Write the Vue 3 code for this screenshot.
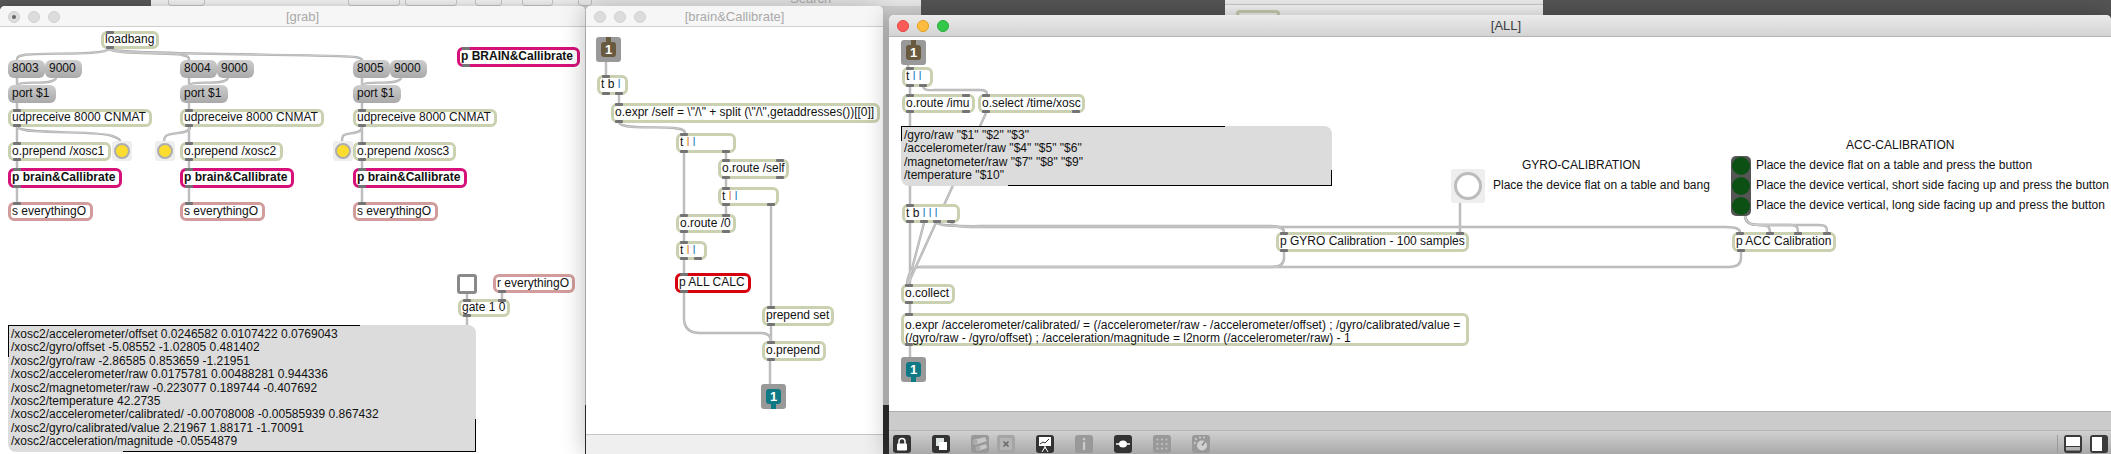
<script setup>
// page coordinates are kept in the data, each canvas subtracts its own origin
const node = (x, y, w, h, text, kind = 'obj', ins = [9], outs = [9]) => ({ x, y, w, h, text, kind, ins, outs })
const t = (txt, c) => ({ txt, c })
const ORANGE = '#d9822b'
const BLUE = '#2a7fc0'

const columns = [
  { x: 8, a: '8003', b: '9000', osc: '/xosc1' },
  { x: 180, a: '8004', b: '9000', osc: '/xosc2' },
  { x: 353, a: '8005', b: '9000', osc: '/xosc3' },
]

const grabNodes = [
  node(101, 31, 58, 18, 'loadbang'),
  ...columns.flatMap((c) => [
    node(c.x, 60, 37, 18, c.a, 'num', [], []),
    node(c.x + 37, 60, 37, 18, c.b, 'num', [], []),
    node(c.x, 85, 48, 18, 'port $1', 'num', [], []),
    node(c.x, 109, 144, 18, 'udpreceive 8000 CNMAT'),
    node(c.x, 142, 103, 19, 'o.prepend ' + c.osc),
    node(c.x, 168, 114, 20, 'p brain&Callibrate', 'patcher'),
    node(c.x, 202, 85, 19, 's everythingO', 'send', [9], []),
  ]),
  node(457, 47, 123, 20, 'p BRAIN&Callibrate', 'patcher', [9], [9]),
  node(493, 274, 82, 19, 'r everythingO', 'send', [], [9]),
  node(458, 299, 52, 18, 'gate 1 0', 'obj', [9, 44], [9]),
]

const grabLeds = [
  { x: 112, y: 141 },
  { x: 155, y: 141 },
  { x: 333, y: 141 },
]

const grabMessage = {
  x: 8, y: 325, w: 468, h: 127, top: 351, left: 31, bottom: 352, right: 32,
  lines: [
    '/xosc2/accelerometer/offset 0.0246582 0.0107422 0.0769043',
    '/xosc2/gyro/offset -5.08552 -1.02805 0.481402',
    '/xosc2/gyro/raw -2.86585 0.853659 -1.21951',
    '/xosc2/accelerometer/raw 0.0175781 0.00488281 0.944336',
    '/xosc2/magnetometer/raw -0.223077 0.189744 -0.407692',
    '/xosc2/temperature 42.2735',
    '/xosc2/accelerometer/calibrated/ -0.00708008 -0.00585939 0.867432',
    '/xosc2/gyro/calibrated/value 2.21967 1.88171 -1.70091',
    '/xosc2/acceleration/magnitude -0.0554879',
  ],
}

const grabWires = [
  'M109 49C105 56 40 52 24 55C17 56 17 58 17 60',
  'M109 49C115 55 170 52 182 55C189 56 189 58 189 60',
  'M109 49C118 55 340 54 355 57C361 58 362 59 362 60',
  ...columns.flatMap((c) => [
    `M${c.x + 9} 78V85`,
    `M${c.x + 48} 78C${c.x + 46} 86 ${c.x + 12} 80 ${c.x + 9} 85`,
    `M${c.x + 9} 103V109M${c.x + 9} 127V142M${c.x + 9} 161V168M${c.x + 9} 188V202`,
  ]),
  'M17 127C22 135 100 130 112 136C118 138 120 140 120 141',
  'M190 127C190 135 170 132 166 136C164 138 164 140 164 141',
  'M362 127C362 135 346 132 343 136C342 138 342 140 342 141',
  'M467 294V299M502 293V299M467 317V325',
]

const brainNodes = [
  node(597, 75, 31, 20, [t('t '), t('b '), t('l', BLUE)], 'obj', [9], [9, 22]),
  node(611, 103, 269, 20, 'o.expr /self = \\"/\\" + split (\\"/\\",getaddresses())[[0]]', 'obj', [8], [8]),
  node(676, 133, 60, 20, [t('t '), t('l', ORANGE), t(' '), t('l', BLUE)], 'obj', [8], [8, 50]),
  node(718, 159, 71, 20, 'o.route /self', 'obj', [8, 62], [8, 62]),
  node(718, 187, 61, 19, [t('t '), t('l', ORANGE), t(' '), t('l', BLUE)], 'obj', [8], [8, 53]),
  node(676, 214, 60, 19, 'o.route /0', 'obj', [8, 50], [8, 50]),
  node(676, 241, 31, 19, [t('t '), t('l', ORANGE), t(' '), t('l', BLUE)], 'obj', [8], [8, 22]),
  node(675, 273, 76, 20, 'p ALL CALC', 'patcherRed'),
  node(762, 306, 72, 20, 'prepend set'),
  node(762, 341, 64, 20, 'o.prepend'),
]

const brainWires = [
  'M606 62V75M619 95V103',
  'M619 123C624 130 660 126 674 128C682 129 685 130 685 133',
  'M684 153V214M726 153V159M726 179V187M726 206V214M771 206V306',
  'M684 233V241M684 260V273',
  'M684 293V318C684 328 690 333 700 333H760C768 333 771 336 771 341',
  'M771 326V341M770 361V384',
]

const allNodes = [
  node(902, 67, 31, 20, [t('t '), t('l', BLUE), t(' '), t('l', BLUE)], 'obj', [8], [8, 21]),
  node(902, 94, 73, 19, 'o.route /imu', 'obj', [8, 64], [8, 64]),
  node(978, 94, 107, 19, 'o.select /time/xosc', 'obj', [8], [8, 98]),
  node(902, 204, 58, 19, [t('t b '), t('l l l', BLUE)], 'obj', [8], [8, 22, 35, 49]),
  node(1276, 232, 193, 20, 'p GYRO Calibration - 100 samples', 'obj', [8, 184], [8]),
  node(1732, 232, 104, 20, 'p ACC Calibration', 'obj', [8, 38, 66, 95], [9]),
  node(901, 284, 54, 20, 'o.collect', 'obj', [8], [8]),
  node(901, 313, 568, 33,
    'o.expr /accelerometer/calibrated/ = (/accelerometer/raw - /accelerometer/offset) ; /gyro/calibrated/value = (/gyro/raw - /gyro/offset) ; /acceleration/magnitude = l2norm (/accelerometer/raw) - 1',
    'wrap', [8], [8]),
]

const allMessage = {
  x: 901, y: 126, w: 431, h: 60, top: 323, left: 14, bottom: 323, right: 15,
  lines: [
    '/gyro/raw "$1" "$2" "$3"',
    '/accelerometer/raw "$4" "$5" "$6"',
    '/magnetometer/raw "$7" "$8" "$9"',
    '/temperature "$10"',
  ],
}

const allWires = [
  'M908 65V67M910 87V94',
  'M923 87C925 91 930 90 940 90H980C986 90 987 92 987 94',
  'M910 113V284',
  'M986 113L908 284',
  'M924 223L908 284',
  'M937 223C942 227 970 226 990 226H1270C1280 226 1284 229 1284 232',
  'M951 223C956 228 970 227 990 227H1725C1735 227 1740 229 1740 232',
  'M1460 203V232',
  'M1745 216C1746 224 1752 225 1760 225C1768 225 1770 227 1770 232',
  'M1745 216C1746 224 1752 225 1760 225H1790C1797 225 1798 227 1798 232',
  'M1745 216C1746 224 1752 225 1760 225H1818C1826 225 1827 227 1827 232',
  'M1284 252V258C1284 264 1280 267 1272 267H920C912 267 908 274 907 284',
  'M1741 252V258C1741 264 1737 267 1729 267H920',
  'M910 304V313M910 346V357',
]

const windows = [
  { id: 'grab', ox: 0, oy: 27, w: 585, h: 427, nodes: grabNodes, wires: grabWires, messages: [grabMessage] },
  { id: 'brain', ox: 586, oy: 27, w: 297, h: 407, nodes: brainNodes, wires: brainWires, messages: [] },
  { id: 'all', ox: 889, oy: 37, w: 1222, h: 374, nodes: allNodes, wires: allWires, messages: [allMessage] },
]

// outlines of the toolbar of the window behind, only their lower edge shows
const toolSegs = [
  { x: 168, w: 35 },
  { x: 348, w: 50 },
  { x: 405, w: 50 },
  { x: 475, w: 25 },
  { x: 522, w: 29 },
  { x: 578, w: 12 },
]

const box = (win, n) => ({
  left: n.x - win.ox + 'px',
  top: n.y - win.oy + 'px',
  width: n.w + 'px',
  height: n.h + 'px',
})

const tabs = (win) =>
  win.nodes.flatMap((n) => [
    ...n.ins.map((dx) => ({ left: n.x + dx - 4 - win.ox + 'px', top: n.y - win.oy + 'px' })),
    ...n.outs.map((dx) => ({ left: n.x + dx - 4 - win.ox + 'px', top: n.y + n.h - 3 - win.oy + 'px' })),
  ])

const parts = (n) => (Array.isArray(n.text) ? n.text : [t(n.text)])

const messageStyle = (win, m) => ({
  ...box(win, m),
  '--edge-top': m.top + 'px',
  '--edge-left': m.left + 'px',
  '--edge-bottom': m.bottom + 'px',
  '--edge-right': m.right + 'px',
})

const canvasOf = (id) => windows.find((w) => w.id === id)
const grab = canvasOf('grab')
const brain = canvasOf('brain')
const all = canvasOf('all')
</script>

<template>
  <div class="desktop">
    <!-- windows behind the patchers -->
    <div class="behind behind-main">
      <div class="behind-toolbar">
        <span
          v-for="s in toolSegs"
          :key="s.x"
          class="tool-seg"
          :style="{ left: s.x - 151 + 'px', width: s.w + 'px' }"
        ></span>
        <span class="search">Search</span>
      </div>
    </div>
    <div class="behind behind-right">
      <span class="stub"></span>
    </div>

    <!-- [grab] -->
    <section class="win win-grab">
      <header class="titlebar">
        <div class="lights"><i class="light dot"></i><i class="light"></i><i class="light"></i></div>
        <span class="title">[grab]</span>
      </header>
      <div class="canvas">
        <svg class="wires" :viewBox="`${grab.ox} ${grab.oy} ${grab.w} ${grab.h}`">
          <path v-for="(d, i) in grab.wires" :key="i" :d="d" class="wire" />
          <path v-for="(d, i) in grab.wires" :key="'h' + i" :d="d" class="wire-hi" />
        </svg>
        <div v-for="(n, i) in grab.nodes" :key="i" class="node" :class="n.kind" :style="box(grab, n)">
          <span v-for="(p, j) in parts(n)" :key="j" :style="{ color: p.c }">{{ p.txt }}</span>
        </div>
        <div class="toggle" :style="box(grab, { x: 457, y: 274, w: 20, h: 20 })"></div>
        <div
          v-for="(l, i) in grabLeds"
          :key="'led' + i"
          class="led-box"
          :style="box(grab, { x: l.x, y: l.y, w: 20, h: 20 })"
        ><i class="led"></i></div>
        <div v-for="(s, i) in tabs(grab)" :key="'t' + i" class="tab" :style="s"></div>
        <div v-for="(m, i) in grab.messages" :key="'m' + i" class="msg" :style="messageStyle(grab, m)">
          <div v-for="line in m.lines" :key="line" class="msg-line">{{ line }}</div>
        </div>
      </div>
    </section>

    <!-- [brain&Callibrate] -->
    <section class="win win-brain">
      <header class="titlebar">
        <div class="lights"><i class="light"></i><i class="light"></i><i class="light"></i></div>
        <span class="title">[brain&amp;Callibrate]</span>
      </header>
      <div class="canvas">
        <svg class="wires" :viewBox="`${brain.ox} ${brain.oy} ${brain.w} ${brain.h}`">
          <path v-for="(d, i) in brain.wires" :key="i" :d="d" class="wire" />
          <path v-for="(d, i) in brain.wires" :key="'h' + i" :d="d" class="wire-hi" />
        </svg>
        <div v-for="(n, i) in brain.nodes" :key="i" class="node" :class="n.kind" :style="box(brain, n)">
          <span v-for="(p, j) in parts(n)" :key="j" :style="{ color: p.c }">{{ p.txt }}</span>
        </div>
        <div v-for="(s, i) in tabs(brain)" :key="'t' + i" class="tab" :style="s"></div>
        <div class="port port-in" :style="box(brain, { x: 596, y: 37, w: 25, h: 25 })"><b>1</b></div>
        <div class="port port-out" :style="box(brain, { x: 761, y: 384, w: 25, h: 25 })"><b>1</b></div>
      </div>
      <div class="statusbar-plain"></div>
    </section>

    <!-- [ALL] -->
    <section class="win win-all">
      <header class="titlebar">
        <div class="lights"><i class="light red"></i><i class="light amber"></i><i class="light green"></i></div>
        <span class="title">[ALL]</span>
      </header>
      <div class="canvas">
        <svg class="wires" :viewBox="`${all.ox} ${all.oy} ${all.w} ${all.h}`">
          <path v-for="(d, i) in all.wires" :key="i" :d="d" class="wire" />
          <path v-for="(d, i) in all.wires" :key="'h' + i" :d="d" class="wire-hi" />
        </svg>
        <div v-for="(m, i) in all.messages" :key="'m' + i" class="msg" :style="messageStyle(all, m)">
          <div v-for="line in m.lines" :key="line" class="msg-line">{{ line }}</div>
        </div>
        <div v-for="(n, i) in all.nodes" :key="i" class="node" :class="n.kind" :style="box(all, n)">
          <span v-for="(p, j) in parts(n)" :key="j" :style="{ color: p.c }">{{ p.txt }}</span>
        </div>
        <div v-for="(s, i) in tabs(all)" :key="'t' + i" class="tab" :style="s"></div>
        <div class="port port-in" :style="box(all, { x: 901, y: 40, w: 25, h: 25 })"><b>1</b></div>
        <div class="port port-out" :style="box(all, { x: 901, y: 357, w: 25, h: 25 })"><b>1</b></div>

        <div class="bang-box" :style="box(all, { x: 1451, y: 169, w: 34, h: 34 })"><i class="bang"></i></div>
        <div class="radio" :style="box(all, { x: 1731, y: 156, w: 20, h: 60 })">
          <i class="radio-dot"></i><i class="radio-dot"></i><i class="radio-dot"></i>
        </div>

        <span class="note" :style="{ left: 633 + 'px', top: 122 + 'px' }">GYRO-CALIBRATION</span>
        <span class="note" :style="{ left: 604 + 'px', top: 142 + 'px' }">Place the device flat on a table and bang</span>
        <span class="note" :style="{ left: 957 + 'px', top: 102 + 'px' }">ACC-CALIBRATION</span>
        <span class="note" :style="{ left: 867 + 'px', top: 122 + 'px' }">Place the device flat on a table and press the button</span>
        <span class="note" :style="{ left: 867 + 'px', top: 142 + 'px' }">Place the device vertical, short side facing up and press the button</span>
        <span class="note" :style="{ left: 867 + 'px', top: 162 + 'px' }">Place the device vertical, long side facing up and press the button</span>
      </div>

      <div class="statusbar"></div>
      <footer class="toolbar">
        <svg class="tb" viewBox="0 0 18 18"><rect width="18" height="18" rx="3" fill="#333" /><path d="M6 9V6.5a3 3 0 0 1 6 0V9" fill="none" stroke="#fff" stroke-width="1.5" /><rect x="4" y="8.500" width="10" height="7" rx="1" fill="#fff" /></svg>
        <svg class="tb" viewBox="0 0 18 18"><rect width="18" height="18" rx="3" fill="#333" /><rect x="4" y="3" width="8" height="8" fill="#dfe5e5" /><rect x="7" y="7" width="8" height="8" fill="#fff" /></svg>
        <div class="tb-pair">
          <svg class="tb" viewBox="0 0 18 18"><rect width="18" height="18" rx="3" fill="#989898" /><path d="M2 5l12-3 2 4-12 4zM5 12l10-3 1 4-9 3z" fill="#c6c6c6" /><circle cx="4" cy="7" r="2.500" fill="#aaa" /><circle cx="7" cy="13.500" r="2.500" fill="#aaa" /></svg>
          <svg class="tb" viewBox="0 0 18 18"><rect width="18" height="18" rx="3" fill="#a5a5a5" /><rect x="3" y="3" width="12" height="12" rx="1" fill="#b5b5b5" /><path d="M6.500 6.500l5 5m0-5l-5 5" stroke="#666" stroke-width="1.500" /></svg>
        </div>
        <svg class="tb" viewBox="0 0 18 18"><rect width="18" height="18" rx="3" fill="#333" /><rect x="3" y="2" width="12" height="9" fill="#fff" /><path d="M4 9l3-2 2 1 4-4" fill="none" stroke="#333" /><path d="M9 11v3M9 12l-3 5M9 12l3 5" stroke="#fff" /></svg>
        <svg class="tb" viewBox="0 0 18 18"><rect width="18" height="18" rx="3" fill="#999" /><rect x="8" y="3" width="2.200" height="2.200" fill="#ccc" /><rect x="8" y="7" width="2.200" height="8" fill="#ccc" /></svg>
        <svg class="tb" viewBox="0 0 18 18"><rect width="18" height="18" rx="3" fill="#333" /><path d="M2 9h14" stroke="#fff" stroke-width="1.500" /><ellipse cx="9" cy="9" rx="4" ry="3.500" fill="#fff" /></svg>
        <svg class="tb" viewBox="0 0 18 18"><rect width="18" height="18" rx="3" fill="#999" /><g fill="#c4c4c4"><circle cx="4.500" cy="4.500" r="1" /><circle cx="9" cy="4.500" r="1" /><circle cx="13.500" cy="4.500" r="1" /><circle cx="4.500" cy="9" r="1" /><circle cx="9" cy="9" r="1" /><circle cx="13.500" cy="9" r="1" /><circle cx="4.500" cy="13.500" r="1" /><circle cx="9" cy="13.500" r="1" /><circle cx="13.500" cy="13.500" r="1" /></g></svg>
        <svg class="tb" viewBox="0 0 18 18"><rect width="18" height="18" rx="3" fill="#999" /><circle cx="10" cy="10.500" r="5" fill="#d0d0d0" /><path d="M10 10.500l3-4" stroke="#888" stroke-width="1.500" /><g fill="#d0d0d0"><circle cx="3" cy="8" r="1" /><circle cx="4" cy="4" r="1" /><circle cx="8" cy="2.500" r="1" /><circle cx="12" cy="2.500" r="1" /></g></svg>
        <div class="tb-right">
          <i class="tb-sep"></i>
          <svg class="tb" viewBox="0 0 18 18"><rect width="18" height="18" rx="3" fill="#3a3a3a" /><rect x="2" y="2" width="14" height="9" fill="#fff" /><rect x="2" y="12" width="14" height="3.500" fill="#b5b5b5" /></svg>
          <svg class="tb" viewBox="0 0 18 18"><rect width="18" height="18" rx="3" fill="#3a3a3a" /><rect x="2" y="2" width="10" height="14" fill="#fff" /></svg>
        </div>
      </footer>
    </section>
  </div>
</template>

<style>
html,
body {
  margin: 0;
  background: #555;
}
</style>

<style scoped>
.desktop {
  position: relative;
  width: 2111px;
  height: 454px;
  overflow: hidden;
  background: #565656;
  font-family: "Liberation Sans", Arial, sans-serif;
  font-size: 12px;
  color: #111;
}

/* Background windows */
.behind {
  position: absolute;
  top: 0;
  background: #efefef;
}

.behind-main {
  left: 151px;
  width: 770px;
  height: 405px;
  background: #d8d8d8;
}

.behind-toolbar {
  position: relative;
  height: 6px;
  overflow: hidden;
  background: #ececec;
}

.tool-seg {
  position: absolute;
  top: -8px;
  height: 12px;
  border: 1px solid #c2c2c2;
  border-radius: 3px;
}

.search {
  position: absolute;
  left: 639px;
  top: -8px;
  font-size: 13px;
  line-height: 14px;
  color: #b0b0b0;
}

.behind-main::after {
  content: '';
  position: absolute;
  left: -151px;
  right: 0;
  top: 405px;
  height: 49px;
  background: #333;
}

.behind-right {
  left: 1225px;
  width: 318px;
  height: 15px;
  background: linear-gradient(#ededed 4px, #c8c8c8 4px, #c8c8c8 5px, #f7f7f7 5px);
}

.stub {
  position: absolute;
  left: 11px;
  top: 10px;
  width: 44px;
  height: 8px;
  border: 3px solid #c9d1b0;
  border-radius: 6px;
  box-sizing: border-box;
}

/* Windows */
.win {
  position: absolute;
  display: flex;
  flex-direction: column;
  background: #fff;
  border-radius: 5px 5px 0 0;
  overflow: hidden;
}

.win-grab {
  left: 0;
  top: 6px;
  width: 585px;
  height: 448px;
  box-shadow: 0 0 8px rgba(0, 0, 0, 0.2);
}

.win-brain {
  left: 586px;
  top: 6px;
  width: 297px;
  height: 448px;
  box-shadow: 0 0 26px rgba(0, 0, 0, 0.28);
}

.win-all {
  left: 889px;
  top: 15px;
  width: 1222px;
  height: 439px;
  box-shadow: 0 0 26px rgba(0, 0, 0, 0.3);
}

.titlebar {
  position: relative;
  flex: 0 0 21px;
  display: flex;
  align-items: center;
  justify-content: center;
  background: #f6f6f6;
  border-bottom: 1px solid #cfcfcf;
  box-sizing: border-box;
}

.win-grab .titlebar {
  padding-left: 20px;
}

.win-all .titlebar {
  flex-basis: 22px;
  padding-left: 12px;
  background: linear-gradient(#ebebeb, #d3d3d3);
  border-bottom-color: #b4b4b4;
}

.title {
  font-size: 13px;
  color: #a9a9a9;
}

.win-all .title {
  color: #3c3c3c;
}

.lights {
  position: absolute;
  left: 8px;
  top: 5px;
  display: flex;
  gap: 8px;
}

.light {
  position: relative;
  width: 12px;
  height: 12px;
  border-radius: 50%;
  background: #dcdcdc;
  border: 1px solid #d0d0d0;
  box-sizing: border-box;
}

.light.dot::after {
  content: '';
  position: absolute;
  left: 3px;
  top: 3px;
  width: 4px;
  height: 4px;
  border-radius: 50%;
  background: #666;
}

.light.red {
  background: #fc5b57;
  border-color: #e2463f;
}

.light.amber {
  background: #fdbc40;
  border-color: #e1a116;
}

.light.green {
  background: #34c84a;
  border-color: #2aab3a;
}

.canvas {
  position: relative;
  flex: 1;
  overflow: hidden;
}

.wires {
  position: absolute;
  left: 0;
  top: 0;
  width: 100%;
  height: 100%;
}

.win-all .wires {
  height: 374px;
}

.win-brain .wires {
  height: 407px;
}

.wire {
  fill: none;
  stroke: #b0b0b0;
  stroke-width: 2.4;
}

.wire-hi {
  fill: none;
  stroke: #d2d2d2;
  stroke-width: 0.8;
}

/* Patcher objects */
.node {
  position: absolute;
  box-sizing: border-box;
  display: flex;
  align-items: center;
  padding: 0 1px;
  border: 3px solid #c9d1b0;
  border-radius: 6px;
  background: #fff;
  white-space: pre;
  line-height: 13.400px;
}

.node.wrap {
  display: block;
  padding-top: 3px;
  white-space: normal;
}

.node.num {
  border: 0;
  padding: 0 4px;
  background: linear-gradient(#cdcdcd, #a9a9a9);
}

.node.patcher {
  border-color: #d6127a;
  font-weight: 700;
}

.node.patcherRed {
  border-color: #d7000f;
}

.node.send {
  border-color: #d19c9c;
}

.tab {
  position: absolute;
  width: 8px;
  height: 3px;
  border-radius: 1px;
  background: #747474;
}

.toggle {
  position: absolute;
  box-sizing: border-box;
  border: 3px solid #8a8a8a;
  border-radius: 3px;
  background: #fff;
}

.led-box {
  position: absolute;
  display: flex;
  align-items: center;
  justify-content: center;
  border-radius: 3px;
  background: #eeeeee;
}

.led {
  width: 16px;
  height: 16px;
  box-sizing: border-box;
  border: 2px solid #adadad;
  border-radius: 50%;
  background: #fcdc2e;
}

/* Message boxes */
.msg {
  position: absolute;
  box-sizing: border-box;
  padding: 3px 3px;
  border-radius: 0 8px 0 8px;
  background: #dcdcdc;
  white-space: nowrap;
}

.msg::before,
.msg::after {
  content: '';
  position: absolute;
  border: 0 solid #000;
}

.msg::before {
  left: 0;
  top: 0;
  width: var(--edge-top);
  height: var(--edge-left);
  border-width: 1px 0 0 1px;
}

.msg::after {
  right: 0;
  bottom: 0;
  width: var(--edge-bottom);
  height: var(--edge-right);
  border-width: 0 1px 1px 0;
}

.msg-line {
  height: 13.400px;
  line-height: 13.400px;
}

/* Inlets and outlets */
.port {
  position: absolute;
  display: flex;
  align-items: center;
  justify-content: center;
  border-radius: 3px;
  background: #999;
}

.port b {
  position: relative;
  width: 15px;
  height: 15px;
  border-radius: 3px;
  text-align: center;
  font-size: 13px;
  line-height: 15px;
  color: #fff;
}

.port b::before {
  content: '';
  position: absolute;
  left: 5px;
  width: 5px;
  height: 6px;
}

.port-in b {
  background: #69593f;
}

.port-in b::before {
  top: -5px;
  background: #69593f;
}

.port-out b {
  background: #0f7a85;
}

.port-out b::before {
  bottom: -5px;
  background: #0f7a85;
}

.bang-box {
  position: absolute;
  display: flex;
  align-items: center;
  justify-content: center;
  border-radius: 3px;
  background: #eeeeee;
}

.bang {
  width: 28px;
  height: 28px;
  box-sizing: border-box;
  border: 3px solid #bcbcbc;
  border-radius: 50%;
  background: #fff;
}

.radio {
  position: absolute;
  display: flex;
  flex-direction: column;
  align-items: center;
  justify-content: space-around;
  border-radius: 5px;
  background: #555;
}

.radio-dot {
  flex: 0 0 18px;
  width: 18px;
  border-radius: 50%;
  background: #0c5014;
}

.note {
  position: absolute;
  line-height: 14px;
  white-space: nowrap;
  transform: translateY(-1px);
}

/* Footers */
.statusbar-plain {
  flex: 0 0 20px;
  background: #efefef;
  border-top: 1px solid #c6c6c6;
  box-sizing: border-box;
}

.statusbar {
  flex: 0 0 19px;
  background: #cbcbcb;
  border-top: 1px solid #aeaeae;
  box-sizing: border-box;
}

.toolbar {
  flex: 0 0 24px;
  box-sizing: border-box;
  display: flex;
  align-items: flex-end;
  gap: 21px;
  padding: 0 3px 1px 4px;
  border-top: 1px solid #b5b5b5;
  background: linear-gradient(#d0d0d0, #a9a9a9);
}

.tb {
  display: block;
  width: 18px;
  height: 18px;
  flex-shrink: 0;
}

.tb-pair {
  display: flex;
  gap: 8px;
}

.tb-right {
  display: flex;
  align-items: flex-end;
  gap: 8px;
  margin-left: auto;
}

.tb-sep {
  width: 1px;
  height: 18px;
  margin-right: -2px;
  background: #9a9a9a;
}
</style>
